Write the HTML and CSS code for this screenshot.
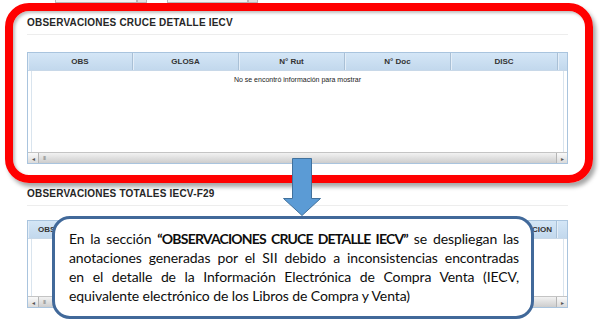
FILE: index.html
```html
<!DOCTYPE html>
<html lang="es">
<head>
<meta charset="utf-8">
<link rel="stylesheet" href="styles.css">
</head>
<body>
<div class="page">
  <div class="strip">
    <span class="inp w82"></span><span class="inp w10"></span>
    <span class="inp w81 ml"></span><span class="inp w10"></span>
  </div>

  <section class="panel">
    <h2 class="title">OBSERVACIONES CRUCE DETALLE IECV</h2>
    <div class="grid">
      <div class="grid-head cols1">
        <span>OBS</span><span>GLOSA</span><span>N° Rut</span><span>N° Doc</span><span>DISC</span><span></span>
      </div>
      <div class="grid-body b1">
        <div class="inner"><p class="empty">No se encontró información para mostrar</p></div>
      </div>
      <div class="hscroll">
        <span class="sbtn">&#9666;</span><span class="grip">&#8214;&#8214;</span><span class="track"></span><span class="sbtn r">&#9656;</span>
      </div>
    </div>
  </section>

  <section class="panel">
    <h2 class="title t2">OBSERVACIONES TOTALES IECV-F29</h2>
    <div class="grid g2">
      <div class="grid-head cols2">
        <span class="left">OBS</span><span></span><span></span><span></span><span class="right">OBSERVACION</span><span></span>
      </div>
      <div class="grid-body b2">
        <div class="inner"></div>
      </div>
      <div class="hscroll">
        <span class="sbtn">&#9666;</span><span class="grip">&#8214;&#8214;</span><span class="track"></span><span class="sbtn r">&#9656;</span>
      </div>
    </div>
  </section>
</div>

<div class="frame"></div>

<svg class="arrow" width="44" height="62" viewBox="0 0 44 62">
  <path d="M12.5 2.5 H31.5 V42.5 H40.5 L22 59.5 L3.5 42.5 H12.5 Z" fill="#5b9bd5" stroke="#41719c" stroke-width="1"/>
</svg>

<div class="callout">
  <p>
    <span class="ln">En la sección <b>“OBSERVACIONES CRUCE DETALLE IECV”</b> se despliegan las</span>
    <span class="ln">anotaciones generadas por el SII debido a inconsistencias encontradas</span>
    <span class="ln">en el detalle de la Información Electrónica de Compra Venta (IECV,</span>
    <span class="ln last">equivalente electrónico de los Libros de Compra y Venta)</span>
  </p>
</div>
</body>
</html>
```

FILE: styles.css
```css
* { box-sizing: border-box; }
body {
  margin: 0;
  width: 600px;
  height: 329px;
  overflow: hidden;
  position: relative;
  background: #fff;
  font-family: "Liberation Sans", Arial, sans-serif;
}
.page { padding: 0 32px 0 27px; }

.strip { display: flex; height: 3px; padding-left: 28px; }
.inp { height: 3px; border: 1px solid #b9b9b9; border-top: 0; background: #f2f2f2; }
.w82 { width: 82px; }
.w81 { width: 81px; }
.w10 { width: 10px; background: #e0e0e0; }
.ml { margin-left: 20px; }

.title {
  margin: 13px 0 0;
  padding-bottom: 4px;
  border-bottom: 1px solid #ededed;
  font-size: 10px;
  line-height: 14px;
  font-weight: bold;
  color: #262626;
  letter-spacing: 0.2px;
}
.t2 { margin-top: 23px; }

.grid { margin-top: 17px; border: 1px solid #a9c4de; }
.g2 { margin-top: 14px; }

.grid-head {
  display: grid;
  height: 18px;
  background: linear-gradient(#d4e6f6, #c2d8ed);
  border-bottom: 1px solid #c8d8e8;
}
.cols1 { grid-template-columns: 105px 106px 106px 106px 107px 1fr; }
.cols2 { grid-template-columns: 40px 120px 120px 120px 129px 1fr; }
.grid-head span {
  display: flex;
  align-items: center;
  justify-content: center;
  font-size: 8px;
  font-weight: bold;
  color: #333;
  border-right: 1px solid #a9c0d6;
  box-shadow: inset 1px 0 #e4eef8;
  white-space: nowrap;
  overflow: hidden;
}
.grid-head span.left { justify-content: flex-start; padding-left: 10px; }
.grid-head span.right { justify-content: flex-end; padding-right: 4px; }
.grid-head span:last-child { border-right: 0; }

.grid-body { padding: 0 3px; background: #fff; }
.b1 { height: 81px; }
.b2 { height: 57px; }
.inner { height: 100%; border-left: 1px solid #d9e4ee; border-right: 1px solid #d9e4ee; }
.empty {
  margin: 0;
  padding-top: 4px;
  text-align: center;
  font-size: 7px;
  line-height: 9px;
  color: #222;
}

.hscroll {
  display: flex;
  height: 11px;
  background: linear-gradient(#f2f2f2, #cdcdcd);
  border-top: 1px solid #c4c4c4;
}
.sbtn {
  width: 11px;
  display: flex;
  align-items: center;
  justify-content: center;
  font-size: 6px;
  color: #555;
  border-right: 1px solid #b5b5b5;
  background: linear-gradient(#fafafa, #dadada);
}
.sbtn.r { border-right: 0; border-left: 1px solid #b5b5b5; }
.grip {
  width: 10px;
  font-size: 5px;
  color: #888;
  display: flex;
  align-items: center;
  justify-content: center;
  letter-spacing: -1px;
}
.track { flex: 1; }

.frame {
  position: absolute;
  left: 5px;
  top: 3px;
  width: 588px;
  height: 180px;
  border: 8px solid #ff0000;
  border-radius: 24px;
  box-shadow: 3px 4px 4px rgba(0, 0, 0, 0.35), inset 2px 2px 3px rgba(0, 0, 0, 0.25);
}

.arrow { position: absolute; left: 280px; top: 156px; }

.callout {
  position: absolute;
  left: 52px;
  top: 216px;
  width: 482px;
  height: 103px;
  background: #fff;
  border: 3px solid #41699a;
  border-radius: 18px;
  padding: 10px 12px 0 14px;
}
.callout p {
  margin: 0;
  font-family: Lato, "Open Sans", sans-serif;
  font-size: 14px;
  line-height: 19px;
  letter-spacing: -0.1px;
  color: #0d0d0d;
}
.callout .ln {
  display: block;
  white-space: nowrap;
  text-align: justify;
  text-align-last: justify;
}
.callout .ln.last { text-align-last: left; }
.callout b { font-weight: bold; letter-spacing: -0.8px; }
```
